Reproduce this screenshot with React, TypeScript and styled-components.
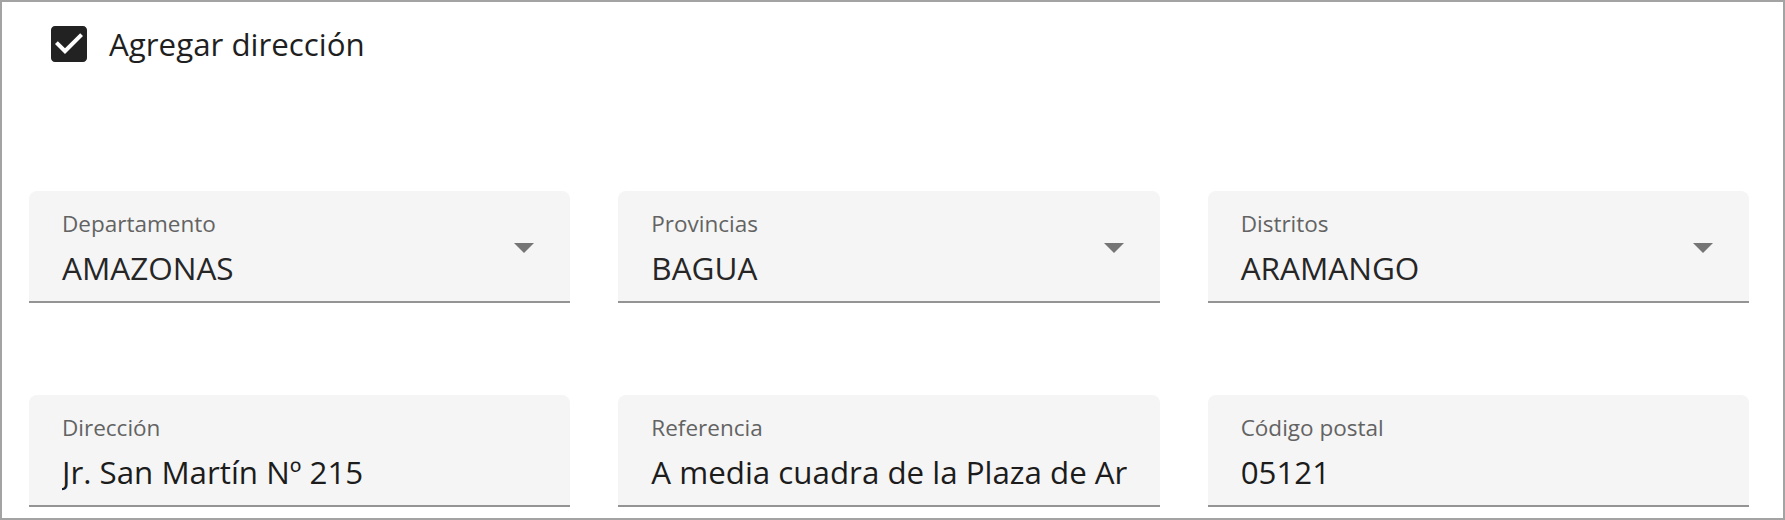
import styled, { createGlobalStyle } from "styled-components";

const GlobalStyle = createGlobalStyle`
  html, body {
    margin: 0;
    padding: 0;
    background: #ffffff;
  }
  body {
    font-family: "Open Sans", "Noto Sans", Arial, sans-serif;
    color: #222222;
  }
`;

interface IField {
  label: string;
  value: string;
  select?: boolean;
}

const Fields: IField[] = [
  { label: "Departamento", value: "AMAZONAS", select: true },
  { label: "Provincias", value: "BAGUA", select: true },
  { label: "Distritos", value: "ARAMANGO", select: true },
  { label: "Dirección", value: "Jr. San Martín Nº 215" },
  { label: "Referencia", value: "A media cuadra de la Plaza de Armas" },
  { label: "Código postal", value: "05121" },
];

const Frame = styled.div`
  box-sizing: border-box;
  width: 1785px;
  height: 520px;
  border: 2px solid #a3a3a3;
  overflow: hidden;
`;

const CheckRow = styled.label`
  display: flex;
  align-items: center;
  gap: 22px;
  padding: 22px 0 0 49px;
  cursor: pointer;
`;

const CheckText = styled.span`
  font-size: 31.3px;
  line-height: 40px;
  color: #1f1f1f;
`;

const Grid = styled.div`
  display: grid;
  grid-template-columns: repeat(3, 1fr);
  column-gap: 48px;
  row-gap: 92px;
  margin-top: 127px;
  padding: 0 34px 0 27px;
`;

const FieldBox = styled.div`
  box-sizing: border-box;
  height: 112px;
  display: flex;
  align-items: flex-start;
  padding: 0 33px;
  background: #f5f5f5;
  border-radius: 8px 8px 0 0;
  border-bottom: 2px solid #949494;
`;

const FieldText = styled.div`
  flex: 1;
  min-width: 0;
  padding-top: 18px;
`;

const Label = styled.div`
  font-size: 22.5px;
  line-height: 30px;
  color: #636363;
  white-space: nowrap;
`;

const ValueText = styled.div`
  margin-top: 9px;
  font-size: 31.5px;
  line-height: 40px;
  color: #262626;
  white-space: nowrap;
`;

const ValueInput = styled.input`
  display: block;
  width: 100%;
  box-sizing: border-box;
  margin: 9px 0 0;
  padding: 0;
  border: none;
  outline: none;
  background: transparent;
  font-family: inherit;
  font-size: 31.3px;
  line-height: 40px;
  height: 40px;
  color: #1c1c1c;
`;

const Arrow = styled.svg`
  flex: none;
  width: 20px;
  height: 10px;
  margin: 52px 3px 0 0;
  fill: #757575;
`;

const CheckIcon = () => (
  <svg width="36" height="36" viewBox="3 3 18 18" aria-hidden="true">
    <path
      fill="#222222"
      d="M19 3H5c-1.11 0-2 .9-2 2v14c0 1.1.89 2 2 2h14c1.11 0 2-.9 2-2V5c0-1.1-.89-2-2-2zm-9 14l-5-5 1.41-1.41L10 14.17l7.59-7.59L19 8l-9 9z"
    />
  </svg>
);

const Field: React.FC<{ field: IField }> = ({ field }) => (
  <FieldBox>
    <FieldText>
      <Label>{field.label}</Label>
      {field.select ? (
        <ValueText>{field.value}</ValueText>
      ) : (
        <ValueInput defaultValue={field.value} />
      )}
    </FieldText>
    {field.select && (
      <Arrow viewBox="0 0 10 5">
        <path d="M0 0l5 5 5-5z" />
      </Arrow>
    )}
  </FieldBox>
);

export default function App() {
  return (
    <>
      <GlobalStyle />
      <Frame>
        <CheckRow>
          <CheckIcon />
          <CheckText>Agregar dirección</CheckText>
        </CheckRow>
        <Grid>
          {Fields.map((f) => (
            <Field key={f.label} field={f} />
          ))}
        </Grid>
      </Frame>
    </>
  );
}
